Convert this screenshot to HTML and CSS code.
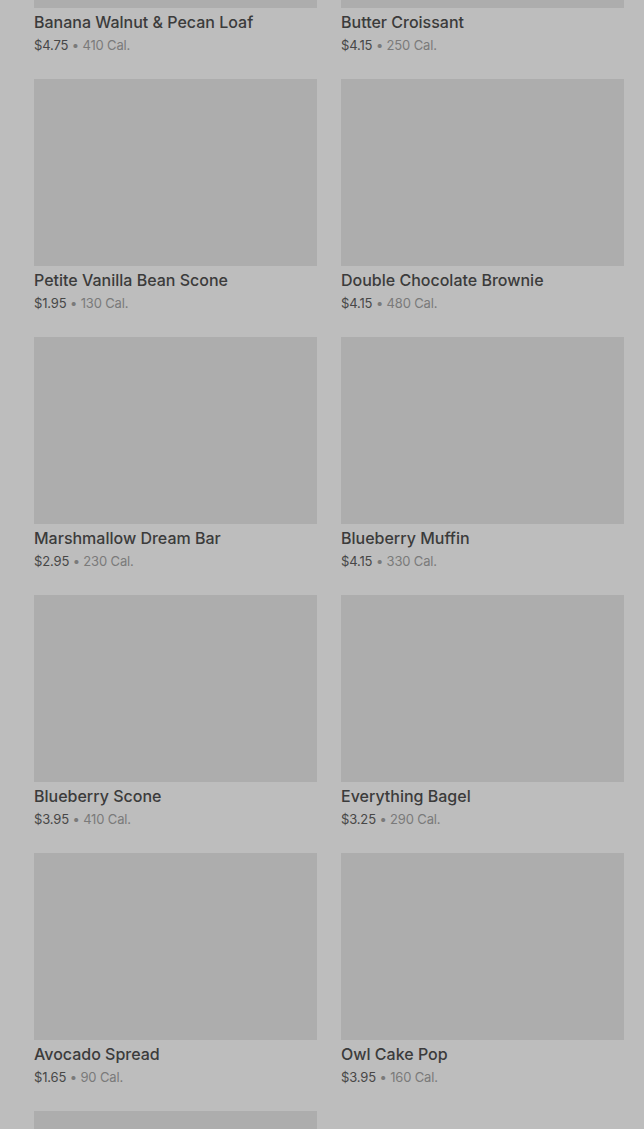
FILE: index.html
```html
<!DOCTYPE html>
<html>
<head>
<meta charset="utf-8">
<link rel="stylesheet" href="styles.css">
</head>
<body>
<div class="page">
  <div class="grid">
    <div class="card"><div class="img"></div><div class="name">Banana Walnut &amp; Pecan Loaf</div><div class="meta"><span class="price">$4.75</span> • 410 Cal.</div></div>
    <div class="card"><div class="img"></div><div class="name">Butter Croissant</div><div class="meta"><span class="price">$4.15</span> • 250 Cal.</div></div>
    <div class="card"><div class="img"></div><div class="name">Petite Vanilla Bean Scone</div><div class="meta"><span class="price">$1.95</span> • 130 Cal.</div></div>
    <div class="card"><div class="img"></div><div class="name">Double Chocolate Brownie</div><div class="meta"><span class="price">$4.15</span> • 480 Cal.</div></div>
    <div class="card"><div class="img"></div><div class="name">Marshmallow Dream Bar</div><div class="meta"><span class="price">$2.95</span> • 230 Cal.</div></div>
    <div class="card"><div class="img"></div><div class="name">Blueberry Muffin</div><div class="meta"><span class="price">$4.15</span> • 330 Cal.</div></div>
    <div class="card"><div class="img"></div><div class="name">Blueberry Scone</div><div class="meta"><span class="price">$3.95</span> • 410 Cal.</div></div>
    <div class="card"><div class="img"></div><div class="name">Everything Bagel</div><div class="meta"><span class="price">$3.25</span> • 290 Cal.</div></div>
    <div class="card"><div class="img"></div><div class="name">Avocado Spread</div><div class="meta"><span class="price">$1.65</span> • 90 Cal.</div></div>
    <div class="card"><div class="img"></div><div class="name">Owl Cake Pop</div><div class="meta"><span class="price">$3.95</span> • 160 Cal.</div></div>
    <div class="card"><div class="img"></div></div>
  </div>
</div>
</body>
</html>
```
FILE: styles.css
```css
html, body {
  margin: 0;
  padding: 0;
  background: #bdbdbd;
  overflow: hidden;
}
.page {
  padding: 0 20px 0 34px;
  height: 1129px;
  overflow: hidden;
}
.grid {
  display: grid;
  grid-template-columns: 283px 283px;
  column-gap: 24px;
  row-gap: 24px;
  margin-top: -179px;
}
.card {
  font-family: Inter, "Noto Sans", sans-serif;
}
.img {
  height: 187px;
  background: #adadad;
}
.name {
  margin-top: 4px;
  font-size: 16px;
  line-height: 20px;
  font-weight: 500;
  color: #3b3b3b;
}
.meta {
  margin-top: 3px;
  font-size: 13px;
  line-height: 20px;
  color: #7a7a7a;
  letter-spacing: -0.15px;
}
.price {
  color: #474747;
}
```
